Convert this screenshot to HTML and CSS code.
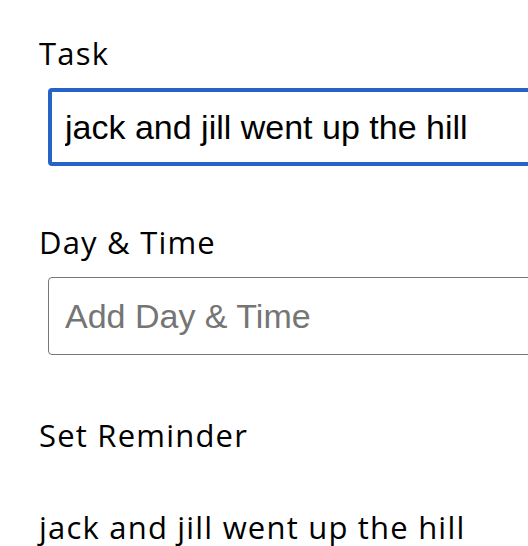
FILE: index.html
```html
<!DOCTYPE html>
<html>
<head>
<meta charset="utf-8">
<link rel="stylesheet" href="styles.css">
</head>
<body>
<form class="form">
  <div class="field">
    <label class="label" for="task">Task</label>
    <input class="input input-focus" id="task" type="text" value="jack and jill went up the hill">
  </div>
  <div class="field field-day">
    <label class="label" for="day">Day &amp; Time</label>
    <input class="input" id="day" type="text" placeholder="Add Day &amp; Time">
  </div>
  <div class="field field-check">
    <label class="label">Set Reminder</label>
  </div>
  <p class="task-text">jack and jill went up the hill</p>
</form>
</body>
</html>
```
FILE: styles.css
```css
html, body {
  margin: 0;
  padding: 0;
  background: #ffffff;
  overflow: hidden;
}
.form {
  padding: 33px 0 0 39px;
  font-family: "Open Sans", sans-serif;
  color: #000;
  overflow: hidden;
}
.field {
  display: flex;
  flex-direction: column;
  gap: 15px;
  margin-bottom: 56px;
}
.field-day {
  margin-bottom: 60px;
}
.field-check {
  margin-bottom: 52px;
}
.label {
  font-size: 31px;
  line-height: 40px;
  letter-spacing: 1.2px;
}
.input {
  box-sizing: border-box;
  width: 489px;
  height: 78px;
  margin-left: 9px;
  margin-right: -100px;
  padding: 0 16px;
  font-family: "Liberation Sans", Arial, sans-serif;
  font-size: 34px;
  color: #000;
  border: 1px solid #767676;
  border-radius: 4px;
  outline: none;
  background: #fff;
}
.input::placeholder {
  color: #757575;
}
.input-focus {
  border: 4px solid #2563c7;
  padding: 0 13px;
}
.task-text {
  margin: 0;
  font-size: 31px;
  line-height: 40px;
  letter-spacing: 1.2px;
  white-space: nowrap;
}
```
